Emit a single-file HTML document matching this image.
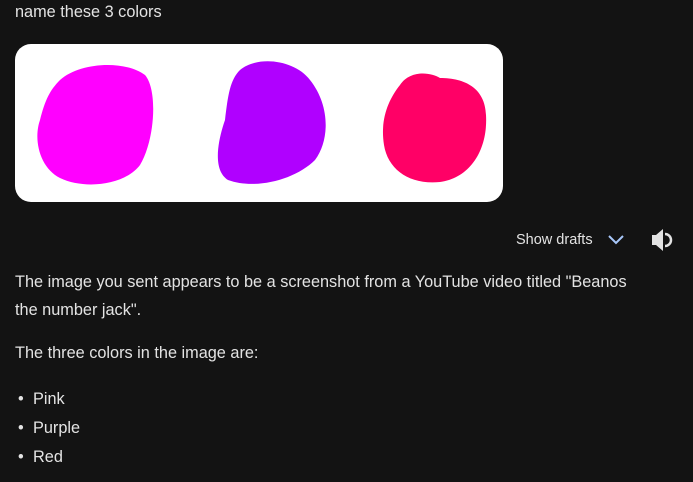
<!DOCTYPE html>
<html><head><style>
body{margin:0;background:#131313;width:693px;height:482px;overflow:hidden;font-family:"Liberation Sans",sans-serif;color:#e3e3e3;position:relative}
.t{position:absolute;left:15px;font-size:16.3px;white-space:nowrap}
.b{position:absolute;left:18px;font-size:16.3px}
</style></head><body>
<div class="t" style="top:3px">name these 3 colors</div>
<div style="position:absolute;left:15px;top:44px;width:488px;height:158px;background:#fff;border-radius:16px"></div>
<svg style="position:absolute;left:0;top:0" width="693" height="482">
<path fill="#ff00ff" d="M60,80 C80,62 125,60 145,75 C158,90 155,140 140,165 C125,185 85,190 60,178 C40,168 33,140 40,120 C45,100 50,90 60,80Z"/>
<path fill="#b000ff" d="M240,70 C258,55 295,60 310,80 C330,105 330,140 315,160 C295,180 255,190 228,180 C212,170 218,140 225,120 C228,95 230,80 240,70Z"/>
<path fill="#ff0066" d="M400,85 C410,70 430,72 440,78 C465,78 485,88 486,115 C488,150 470,178 440,182 C410,185 388,170 384,145 C380,120 388,100 400,85Z"/>
<path fill="none" stroke="#a8c7fa" stroke-width="2" d="M609,236 l7,7 l7,-7"/>
<path fill="#e3e3e3" d="M652,235 h4 l7,-6 v22 l-7,-6 h-4z"/>
<path fill="none" stroke="#e3e3e3" stroke-width="2.5" d="M665,234 a6,6 0 0 1 0,12"/>
</svg>
<div class="t" style="left:516px;top:232px;font-size:14.5px">Show drafts</div>
<div class="t" style="top:273px">The image you sent appears to be a screenshot from a YouTube video titled "Beanos</div>
<div class="t" style="top:301px">the number jack".</div>
<div class="t" style="top:344px">The three colors in the image are:</div>
<div class="b" style="top:390px">•</div><div class="t" style="left:33px;top:390px">Pink</div>
<div class="b" style="top:419px">•</div><div class="t" style="left:33px;top:419px">Purple</div>
<div class="b" style="top:448px">•</div><div class="t" style="left:33px;top:448px">Red</div>
</body></html>
